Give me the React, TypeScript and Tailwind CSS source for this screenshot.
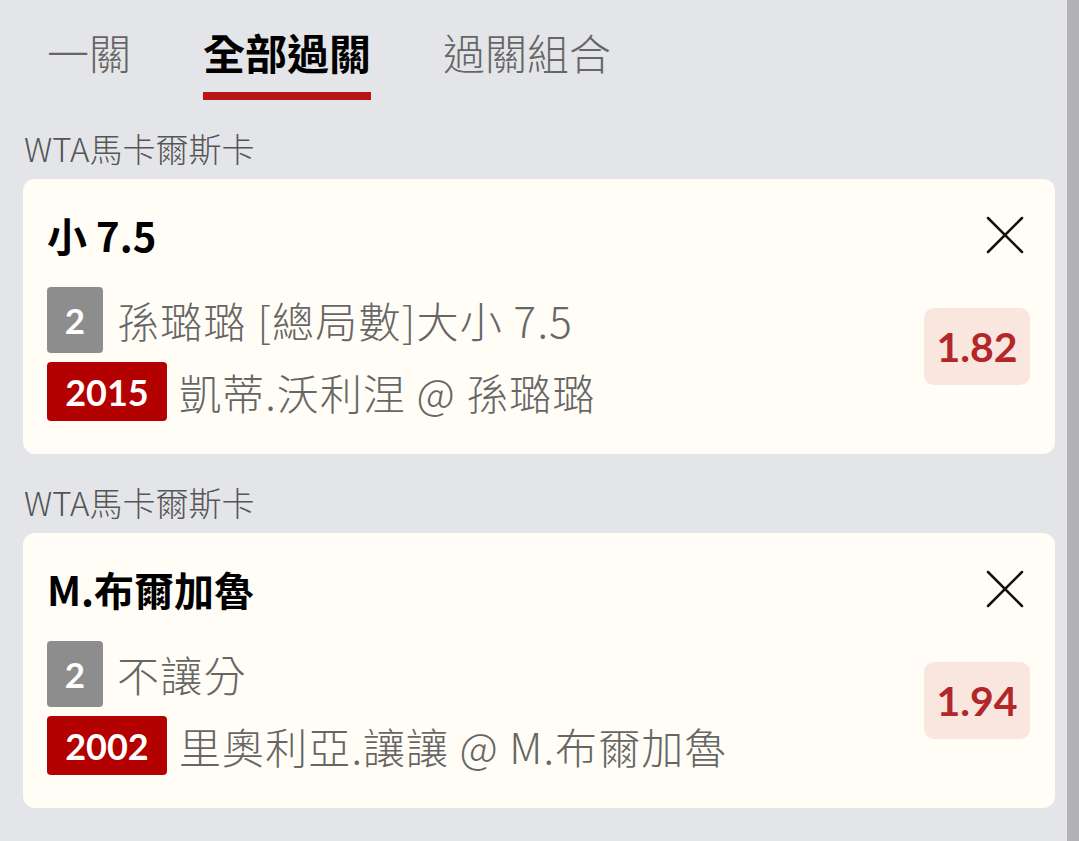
import React from "react";

const CJK = { fontFamily: "'Noto Sans CJK TC', sans-serif" };
const LATO = { fontFamily: "Lato, sans-serif" };

interface Bet {
  league: string;
  title: string;
  market: string;
  matchNo: string;
  match: string;
  odds: string;
}

const bets: Bet[] = [
  { league: "WTA馬卡爾斯卡", title: "小 7.5", market: "孫璐璐 [總局數]大小 7.5", matchNo: "2015", match: "凱蒂.沃利涅 @ 孫璐璐", odds: "1.82" },
  { league: "WTA馬卡爾斯卡", title: "M.布爾加魯", market: "不讓分", matchNo: "2002", match: "里奧利亞.讓讓 @ M.布爾加魯", odds: "1.94" },
];

function CloseIcon() {
  return (
    <svg width="38" height="38" viewBox="0 0 38 38" className="shrink-0">
      <path d="M2 2 L36 36 M36 2 L2 36" stroke="#111" strokeWidth="2.5" strokeLinecap="round" />
    </svg>
  );
}

function BetCard({ bet }: { bet: Bet }) {
  return (
    <div>
      <div className="h-[79px] pt-[30px] pl-[1px] text-[33px] leading-[36px] font-light text-[#555]" style={CJK}>
        {bet.league}
      </div>
      <div className="rounded-[12px] bg-[#fffdf5] pl-[24px] pr-[25px] pt-[36px] pb-[33px]">
        <div className="flex items-center justify-between pr-[6px]">
          <div className="text-[40px] leading-[40px] font-bold text-black" style={CJK}>{bet.title}</div>
          <CloseIcon />
        </div>
        <div className="mt-[32px] flex items-start justify-between">
          <div className="flex flex-col gap-[9px]">
            <div className="flex items-center gap-[14px]">
              <div className="flex h-[66px] w-[56px] items-center justify-center rounded-[4px] bg-[#8d8d8d] text-[35px] font-bold text-white" style={LATO}>2</div>
              <div className="text-[42px] leading-[48px] font-light tracking-[1.3px] text-[#666]" style={CJK}>{bet.market}</div>
            </div>
            <div className="flex items-center gap-[12px]">
              <div className="flex h-[59px] w-[120px] items-center justify-center rounded-[4px] bg-[#b30000] text-[36px] font-bold text-white" style={LATO}>{bet.matchNo}</div>
              <div className="text-[42px] leading-[48px] font-light tracking-[1.1px] text-[#666]" style={CJK}>{bet.match}</div>
            </div>
          </div>
          <div className="mt-[21px] flex h-[77px] w-[106px] items-center justify-center rounded-[10px] bg-[#f8e6df] text-[41px] font-bold text-[#b3262a]" style={LATO}>
            {bet.odds}
          </div>
        </div>
      </div>
    </div>
  );
}

export default function App() {
  const tabs = ["一關", "全部過關", "過關組合"];
  return (
    <div className="flex min-h-[841px] w-full bg-[#e4e5e9]">
      <div className="flex-1 pl-[23px] pr-[12px]">
        <div className="flex gap-[72px] pl-[24px] pt-[26px]">
          {tabs.map((t, i) => (
            <div key={t} className="flex flex-col">
              <div
                className={`text-[42px] leading-[52px] ${i === 1 ? "font-bold text-black" : "font-light text-[#666]"}`}
                style={CJK}
              >
                {t}
              </div>
              <div className={`mt-[14px] h-[8px] ${i === 1 ? "bg-[#b8141a]" : "bg-transparent"}`} />
            </div>
          ))}
        </div>
        <div>
          {bets.map((b) => (
            <BetCard key={b.matchNo} bet={b} />
          ))}
        </div>
      </div>
      <div className="w-[12px] bg-[#b2b2b4]" />
    </div>
  );
}
